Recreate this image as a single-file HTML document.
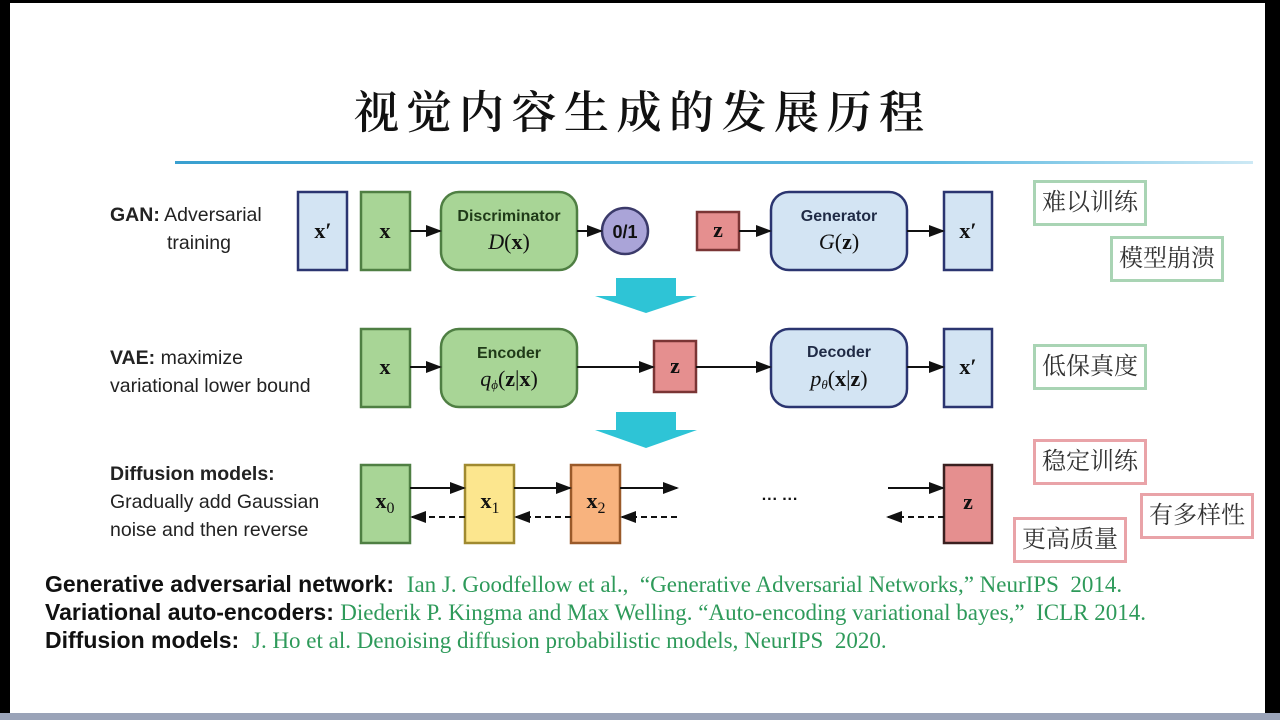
<!DOCTYPE html>
<html><head><meta charset="utf-8"><style>
body{margin:0;width:1280px;height:720px;overflow:hidden;background:#000;position:relative;font-family:"Liberation Sans",sans-serif}
#slide{position:absolute;left:10px;top:3px;width:1255px;height:710px;background:#fff}
.t{position:absolute;white-space:nowrap}
.tag{position:absolute;font-family:"Liberation Serif","Noto Serif CJK SC",serif;font-size:24px;line-height:40px;padding:0 6px;background:#fff;color:#333}
.g{border:3px solid #a9d4b4}.r{border:3px solid #e9a3a8}
.ref{position:absolute;left:45px;font-size:23px;font-weight:bold;color:#111;white-space:nowrap;line-height:28px}
.ref span{font-family:"Liberation Serif",serif;font-weight:normal;color:#2e9a5a;font-size:23px}
.lab{position:absolute;font-size:19.5px;color:#222;line-height:28px;white-space:nowrap}
</style></head><body>
<div id="slide"></div>
<div style="position:absolute;left:0;top:713px;width:1280px;height:7px;background:#9aa3b8"></div>
<div class="t" style="left:354px;top:76px;font-family:'Noto Serif CJK SC',serif;font-weight:600;font-size:45px;letter-spacing:7.5px;color:#111">视觉内容生成的发展历程</div>
<div style="position:absolute;left:175px;top:161px;width:1078px;height:3px;background:linear-gradient(90deg,#3aa0d0,#5bb8e0 70%,#cde9f5)"></div>
<svg style="position:absolute;left:0;top:0" width="1280" height="720">
<defs><marker id="a" markerWidth="8" markerHeight="8" refX="7" refY="4" orient="auto"><path d="M0,1 L8,4 L0,7z" fill="#111"/></marker></defs>
<g stroke-width="2.5">
<rect x="298" y="192" width="49" height="78" fill="#d3e4f3" stroke="#2b3570"/>
<rect x="361" y="192" width="49" height="78" fill="#a8d596" stroke="#4f7f43"/>
<rect x="441" y="192" width="136" height="78" rx="18" fill="#a8d596" stroke="#4f7f43"/>
<circle cx="625" cy="231" r="23" fill="#aaa4d8" stroke="#3b3a6a"/>
<rect x="697" y="212" width="42" height="38" fill="#e58f8f" stroke="#7a3535"/>
<rect x="771" y="192" width="136" height="78" rx="18" fill="#d3e4f3" stroke="#2b3570"/>
<rect x="944" y="192" width="48" height="78" fill="#d3e4f3" stroke="#2b3570"/>
<rect x="361" y="329" width="49" height="78" fill="#a8d596" stroke="#4f7f43"/>
<rect x="441" y="329" width="136" height="78" rx="18" fill="#a8d596" stroke="#4f7f43"/>
<rect x="654" y="341" width="42" height="51" fill="#e58f8f" stroke="#7a3535"/>
<rect x="771" y="329" width="136" height="78" rx="18" fill="#d3e4f3" stroke="#2b3570"/>
<rect x="944" y="329" width="48" height="78" fill="#d3e4f3" stroke="#2b3570"/>
<rect x="361" y="465" width="49" height="78" fill="#a8d596" stroke="#4f7f43"/>
<rect x="465" y="465" width="49" height="78" fill="#fce68e" stroke="#a08a30"/>
<rect x="571" y="465" width="49" height="78" fill="#f8b37e" stroke="#9a5a2a"/>
<rect x="944" y="465" width="48" height="78" fill="#e58f8f" stroke="#3a2020"/>
</g>
<g stroke="#111" stroke-width="2" marker-end="url(#a)">
<line x1="410" y1="231" x2="440" y2="231"/><line x1="577" y1="231" x2="601" y2="231"/>
<line x1="739" y1="231" x2="770" y2="231"/><line x1="907" y1="231" x2="943" y2="231"/>
<line x1="410" y1="367" x2="440" y2="367"/><line x1="577" y1="367" x2="653" y2="367"/>
<line x1="696" y1="367" x2="770" y2="367"/><line x1="907" y1="367" x2="943" y2="367"/>
<line x1="410" y1="488" x2="464" y2="488"/><line x1="514" y1="488" x2="570" y2="488"/>
<line x1="620" y1="488" x2="677" y2="488"/><line x1="888" y1="488" x2="943" y2="488"/>
</g>
<g stroke="#111" stroke-width="2" stroke-dasharray="6,4" marker-end="url(#a)">
<line x1="465" y1="517" x2="412" y2="517"/><line x1="571" y1="517" x2="516" y2="517"/>
<line x1="677" y1="517" x2="622" y2="517"/><line x1="944" y1="517" x2="888" y2="517"/>
</g>
<path d="M616,278H676V296H697L646,313L595,296H616Z" fill="#2ec4d6"/>
<path d="M616,412H676V430H697L646,448L595,430H616Z" fill="#2ec4d6"/>
<g font-family="Liberation Serif,serif" font-weight="bold" font-size="22" text-anchor="middle" fill="#111">
<text x="323" y="238">x′</text><text x="385" y="238">x</text><text x="718" y="237">z</text><text x="968" y="238">x′</text>
<text x="385" y="374">x</text><text x="675" y="373">z</text><text x="968" y="374">x′</text>
<text x="385" y="508">x<tspan font-size="16" font-weight="normal" dy="5">0</tspan></text>
<text x="490" y="508">x<tspan font-size="16" font-weight="normal" dy="5">1</tspan></text>
<text x="596" y="508">x<tspan font-size="16" font-weight="normal" dy="5">2</tspan></text>
<text x="968" y="509">z</text>
</g>
<g font-family="Liberation Sans,sans-serif" font-weight="bold" font-size="16" text-anchor="middle">
<text x="509" y="221" fill="#1f3a18">Discriminator</text><text x="509" y="358" fill="#1f3a18">Encoder</text>
<text x="839" y="221" fill="#1f2a45">Generator</text><text x="839" y="357" fill="#1f2a45">Decoder</text>
<text x="625" y="238" font-size="18" fill="#111">0/1</text>
<text x="780" y="504" font-size="16" fill="#111">··· ···</text>
</g>
<g font-family="Liberation Serif,serif" font-size="22" text-anchor="middle" fill="#111">
<text x="509" y="249"><tspan font-style="italic">D</tspan>(<tspan font-weight="bold">x</tspan>)</text>
<text x="839" y="249"><tspan font-style="italic">G</tspan>(<tspan font-weight="bold">z</tspan>)</text>
<text x="509" y="386"><tspan font-style="italic">q</tspan><tspan font-size="13" font-style="italic" dy="3">ϕ</tspan><tspan dy="-3">(</tspan><tspan font-weight="bold">z</tspan>|<tspan font-weight="bold">x</tspan>)</text>
<text x="839" y="386"><tspan font-style="italic">p</tspan><tspan font-size="13" font-style="italic" dy="3">θ</tspan><tspan dy="-3">(</tspan><tspan font-weight="bold">x</tspan>|<tspan font-weight="bold">z</tspan>)</text>
</g>
</svg>
<div class="lab" style="left:110px;top:201px"><b>GAN:</b> Adversarial<br><span style="padding-left:57px">training</span></div>
<div class="lab" style="left:110px;top:344px"><b>VAE:</b> maximize<br>variational lower bound</div>
<div class="lab" style="left:110px;top:460px"><b>Diffusion models:</b><br>Gradually add Gaussian<br>noise and then reverse</div>
<div class="tag g" style="left:1033px;top:180px">难以训练</div>
<div class="tag g" style="left:1110px;top:236px">模型崩溃</div>
<div class="tag g" style="left:1033px;top:344px">低保真度</div>
<div class="tag r" style="left:1033px;top:439px">稳定训练</div>
<div class="tag r" style="left:1140px;top:493px">有多样性</div>
<div class="tag r" style="left:1013px;top:517px">更高质量</div>
<div class="ref" style="top:570px">Generative adversarial network: &nbsp;<span>Ian J. Goodfellow et al., &nbsp;“Generative Adversarial Networks,” NeurIPS &nbsp;2014.</span></div>
<div class="ref" style="top:598px">Variational auto-encoders: <span>Diederik P. Kingma and Max Welling. “Auto-encoding variational bayes,” &nbsp;ICLR 2014.</span></div>
<div class="ref" style="top:626px">Diffusion models: &nbsp;<span>J. Ho et al. Denoising diffusion probabilistic models, NeurIPS &nbsp;2020.</span></div>
</body></html>
